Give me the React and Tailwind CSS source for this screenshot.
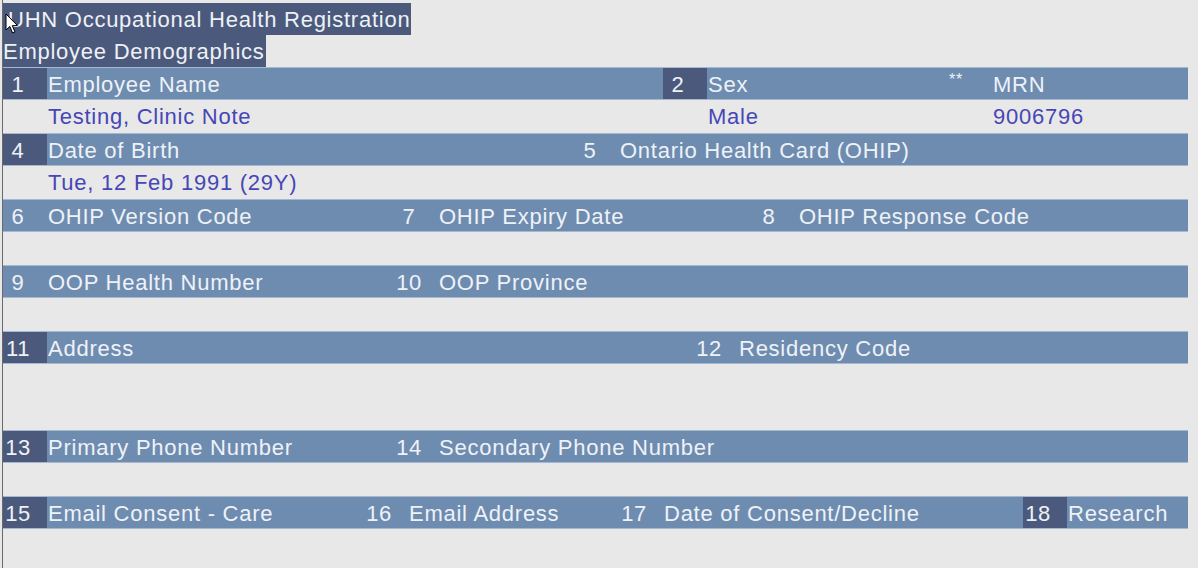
import React from "react";

const font = { fontFamily: '"Liberation Sans", Arial, sans-serif' };

function Num({ n, dark }) {
  return (
    <div
      className={
        "w-[44px] shrink-0 h-full flex items-center pt-[2px] pr-[14px] justify-center tracking-[0.6px] " +
        (dark ? "bg-[#4b5a7c]" : "")
      }
    >
      {n}
    </div>
  );
}

function Group({ n, label, dark, w }) {
  return (
    <div
      className={"flex h-full items-center " + (w ? "shrink-0" : "flex-1")}
      style={w ? { width: w } : undefined}
    >
      <Num n={n} dark={dark} />
      <div className="pl-[1px] pt-[2px] whitespace-nowrap">{label}</div>
    </div>
  );
}

function Bar({ children }) {
  return (
    <div className="w-[1185px] h-[33px] flex bg-[#6e8cb0] border-y border-[#a6b8cf] text-[#eef2f7] text-[22px] leading-[29px] tracking-[0.75px]">
      {children}
    </div>
  );
}

function ValueRow({ children }) {
  return (
    <div className="w-[1185px] h-[33px] flex items-center pt-[1px] text-[#4646b6] text-[22px] leading-[32px] tracking-[0.75px]">
      {children}
    </div>
  );
}

export default function App() {
  return (
    <div
      className="relative w-[1198px] h-[568px] bg-[#e8e8e8] pl-[2px] overflow-hidden"
      style={font}
    >
      <div className="h-full border-l border-[#6a6a6a] pt-[3px]">
        <div className="h-[32px] inline-flex items-center bg-[#4b5a7c] text-[#eef1f6] text-[22px] tracking-[0.75px] pl-[5px] pr-[1px] whitespace-nowrap">
          UHN Occupational Health Registration
        </div>
        <div className="h-[32px] flex">
          <div className="h-full flex items-center bg-[#4b5a7c] text-[#eef1f6] text-[22px] tracking-[0.75px] pr-[1px] whitespace-nowrap">
            Employee Demographics
          </div>
        </div>

        <Bar>
          <Group n="1" dark label="Employee Name" w={660} />
          <Group n="2" dark label="Sex" w={284} />
          <div className="w-[46px] shrink-0 text-[16px] leading-[24px] pl-[2px]">
            **
          </div>
          <div className="flex items-center pt-[2px]">MRN</div>
        </Bar>
        <ValueRow>
          <div className="w-[705px] shrink-0 pl-[45px]">Testing, Clinic Note</div>
          <div className="w-[285px] shrink-0">Male</div>
          <div>9006796</div>
        </ValueRow>

        <Bar>
          <Group n="4" dark label="Date of Birth" w={572} />
          <Group n="5" label="Ontario Health Card (OHIP)" />
        </Bar>
        <ValueRow>
          <div className="pl-[45px]">Tue, 12 Feb 1991 (29Y)</div>
        </ValueRow>

        <Bar>
          <Group n="6" label="OHIP Version Code" w={391} />
          <Group n="7" label="OHIP Expiry Date" w={360} />
          <Group n="8" label="OHIP Response Code" />
        </Bar>
        <ValueRow />

        <Bar>
          <Group n="9" label="OOP Health Number" w={391} />
          <Group n="10" label="OOP Province" />
        </Bar>
        <ValueRow />

        <Bar>
          <Group n="11" dark label="Address" w={691} />
          <Group n="12" label="Residency Code" />
        </Bar>
        <div className="h-[66px]" />

        <Bar>
          <Group n="13" dark label="Primary Phone Number" w={391} />
          <Group n="14" label="Secondary Phone Number" />
        </Bar>
        <ValueRow />

        <Bar>
          <Group n="15" dark label="Email Consent - Care" w={361} />
          <Group n="16" label="Email Address" w={255} />
          <Group n="17" label="Date of Consent/Decline" w={404} />
          <Group n="18" dark label="Research" />
        </Bar>
      </div>

      <svg
        className="absolute left-[5px] top-[13px]"
        width="14"
        height="22"
        viewBox="0 0 14 22"
      >
        <path
          d="M1 1 L1 17 L4.8 13.4 L7.6 20 L10 19 L7.3 12.6 L12.5 12.6 Z"
          fill="#ffffff"
          stroke="#000000"
          strokeWidth="1"
          strokeLinejoin="round"
        />
      </svg>
    </div>
  );
}
